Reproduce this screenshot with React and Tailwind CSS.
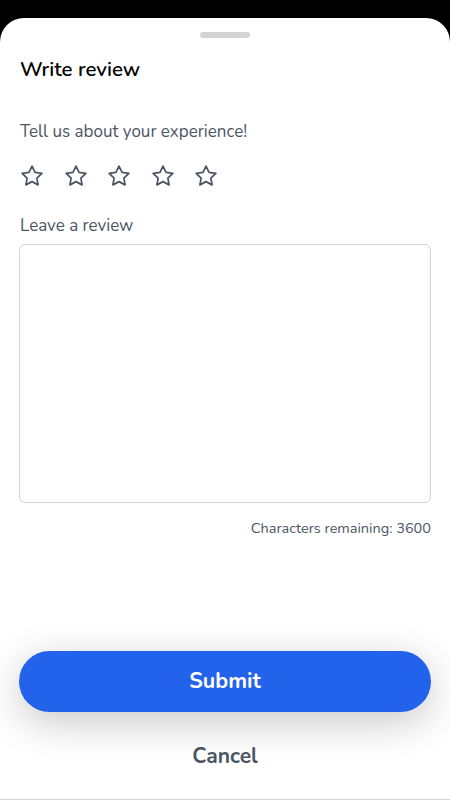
import { useState } from 'react'

function Star() {
  return (
    <svg width="26" height="26" viewBox="0 0 24 24" fill="none" stroke="#4b5563" strokeWidth="1.6" strokeLinejoin="round">
      <path d="M12 2.8l2.8 5.8 6.3.9-4.6 4.4 1.1 6.3L12 17.2l-5.6 3 1.1-6.3L2.9 9.5l6.3-.9L12 2.8z" />
    </svg>
  )
}

export default function App() {
  const [text, setText] = useState('')

  return (
    <div className="min-h-screen bg-black pt-[18px]" style={{ fontFamily: 'Nunito, Lato, "Noto Sans", sans-serif' }}>
      <div className="bg-white rounded-t-[24px] min-h-[782px] flex flex-col border-b border-gray-300">
        <div className="flex justify-center pt-[14px]">
          <div className="w-[50px] h-[6px] rounded-full bg-[#d4d4d4]" />
        </div>
        <div className="px-[20px]">
          <h1 className="mt-[17px] text-[20.5px] font-semibold text-black leading-[28px]">Write review</h1>
          <p className="mt-[37px] text-[17px] text-[#4b5563] leading-[24px]">Tell us about your experience!</p>
          <div className="mt-[19px] flex gap-[17.5px] -ml-[1px]">
            {[0, 1, 2, 3, 4].map(i => <Star key={i} />)}
          </div>
          <label className="block mt-[25px] text-[17px] text-[#4b5563] leading-[24px]">Leave a review</label>
        </div>
        <div className="px-[19px] mt-[6px]">
          <textarea
            value={text}
            onChange={e => setText(e.target.value)}
            maxLength={3600}
            className="block w-full h-[259px] rounded-[6px] border border-[#d1d5db] p-3 text-[16px] resize-none focus:outline-none"
          />
          <p className="mt-[15px] text-right text-[14.5px] text-[#4b5563] leading-[20px]">Characters remaining: {3600 - text.length}</p>
        </div>
        <div className="flex-1" />
        <div className="px-[19px]">
          <button className="w-full h-[61px] rounded-full bg-[#2363eb] text-white text-[21.5px] font-bold shadow-[0_10px_40px_rgba(0,0,0,0.22)]">
            Submit
          </button>
          <button className="w-full mt-[25px] mb-[22px] h-[40px] text-[21px] font-bold text-[#4b5563]">
            Cancel
          </button>
        </div>
      </div>
    </div>
  )
}
